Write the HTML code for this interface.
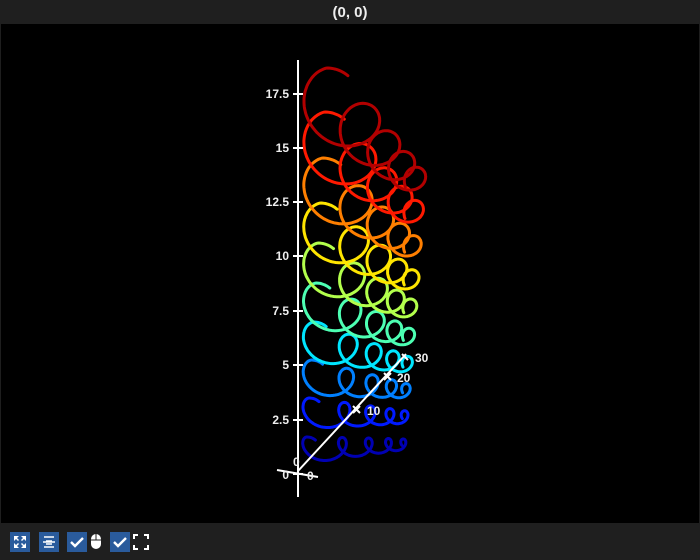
<!DOCTYPE html>
<html><head><meta charset="utf-8"><style>
html,body{margin:0;padding:0;background:#1e1e1e;width:700px;height:560px;overflow:hidden;font-family:"Liberation Sans",sans-serif}
#title{position:absolute;left:0;top:0;width:700px;height:24px;background:#1f1f1f;color:#eee;font-weight:bold;font-size:15px;text-align:center;line-height:25px}
#plot{position:absolute;left:1px;top:24px;width:698px;height:499px;background:#000}
#tb{position:absolute;left:0;top:523px;width:700px;height:37px;background:#1f1f1f}
.b{position:absolute;top:9px;width:20px;height:20px;background:#2a5b9c}
</style></head><body>
<div id="title">(0, 0)</div>
<div id="plot"></div>
<svg id="s" width="700" height="560" style="position:absolute;left:0;top:0">
<g id="curves" fill="none" stroke-width="3" stroke-linecap="round"></g>
<g stroke="#fff" stroke-width="2" fill="none">
<line x1="298" y1="60" x2="298" y2="497"/>
<line x1="298" y1="471" x2="406" y2="354"/>
<line x1="277" y1="470" x2="318" y2="477"/>
<path d="M293 94h10M293 148h10M293 202h10M293 256h10M293 311h10M293 365h10M293 420h10M293 474h10"/>
<path d="M353 406l7 7M360 406l-7 7M384 373l7 7M391 373l-7 7M402 354l6 6"/>
</g>
<g fill="#eee" font-size="12" font-weight="bold" text-anchor="end">
<text x="289" y="98">17.5</text><text x="289" y="152">15</text><text x="289" y="206">12.5</text>
<text x="289" y="260">10</text><text x="289" y="315">7.5</text><text x="289" y="369">5</text>
<text x="289" y="424">2.5</text><text x="289" y="479">0</text>
</g>
<g fill="#eee" font-size="12" font-weight="bold">
<text x="367" y="415">10</text><text x="397" y="382">20</text><text x="415" y="362">30</text>
<text x="307" y="480">0</text><text x="293" y="466">0</text>
</g>
</svg>
<div id="tb">
<div class="b" style="left:10px"><svg width="20" height="20"><path d="M4 4h5l-2 2 2 2-1 1-2-2-2 2zM16 4v5l-2-2-2 2-1-1 2-2-2-2zM4 16v-5l2 2 2-2 1 1-2 2 2 2zM16 16h-5l2-2-2-2 1-1 2 2 2-2z" fill="#fff"/></svg></div>
<div class="b" style="left:39px"><svg width="20" height="20"><path d="M5 5h10M7 9h6M4 10h12M7 12h6M5 15h10" stroke="#fff" stroke-width="1.6"/></svg></div>
<div class="b" style="left:67px"><svg width="20" height="20"><path d="M4 10l4 4 8-8" stroke="#fff" stroke-width="2.4" fill="none"/></svg></div>
<svg style="position:absolute;left:89px;top:9px" width="14" height="20"><rect x="2" y="2" width="10" height="15" rx="5" fill="#fff"/><line x1="7" y1="2" x2="7" y2="8" stroke="#1f1f1f"/><line x1="2" y1="8" x2="12" y2="8" stroke="#1f1f1f"/></svg>
<div class="b" style="left:110px"><svg width="20" height="20"><path d="M4 10l4 4 8-8" stroke="#fff" stroke-width="2.4" fill="none"/></svg></div>
<svg style="position:absolute;left:132px;top:9px" width="18" height="20"><path d="M2 7V3h4M12 3h4v4M16 13v4h-4M6 17H2v-4" stroke="#fff" stroke-width="2" fill="none"/></svg>
</div>
<script>
function jet(v){function c(x){return Math.max(0,Math.min(1,x))}
var r=c(1.5-Math.abs(4*v-3)),g=c(1.5-Math.abs(4*v-2)),b=c(1.5-Math.abs(4*v-1));
return 'rgb('+Math.round(r*255)+','+Math.round(g*255)+','+Math.round(b*255)+')';}
var G=document.getElementById('curves'),h='';
var starts=[437,398,360,322,283,243,203,158,112,68];
for(var k=0;k<10;k++){
 var r0=13+2.2*k, y0=starts[k], d='';
 var loops=4.4, q=0.75, norm=1-Math.pow(q,loops);
 var xEnd=408+1.2*k, drop=10*k-6;
 for(var i=0;i<=500;i++){
  var phi=-0.7+i/500*(loops*2*Math.PI);
  var n=Math.max(0,phi/(2*Math.PI));
  var f=(1-Math.pow(q,n))/norm;
  var r=r0*Math.pow(0.8,n);
  var cx=294+r0+(xEnd-294-r0)*f, cy=y0+r0+drop*f;
  var x=cx-r*Math.sin(phi), y=cy-r*Math.cos(phi);
  d+=(i?'L':'M')+x.toFixed(1)+' '+y.toFixed(1);
 }
 h+='<path d="'+d+'" stroke="'+jet(0.05+k*0.1)+'"/>';
}
G.innerHTML=h;
</script>
</body></html>
